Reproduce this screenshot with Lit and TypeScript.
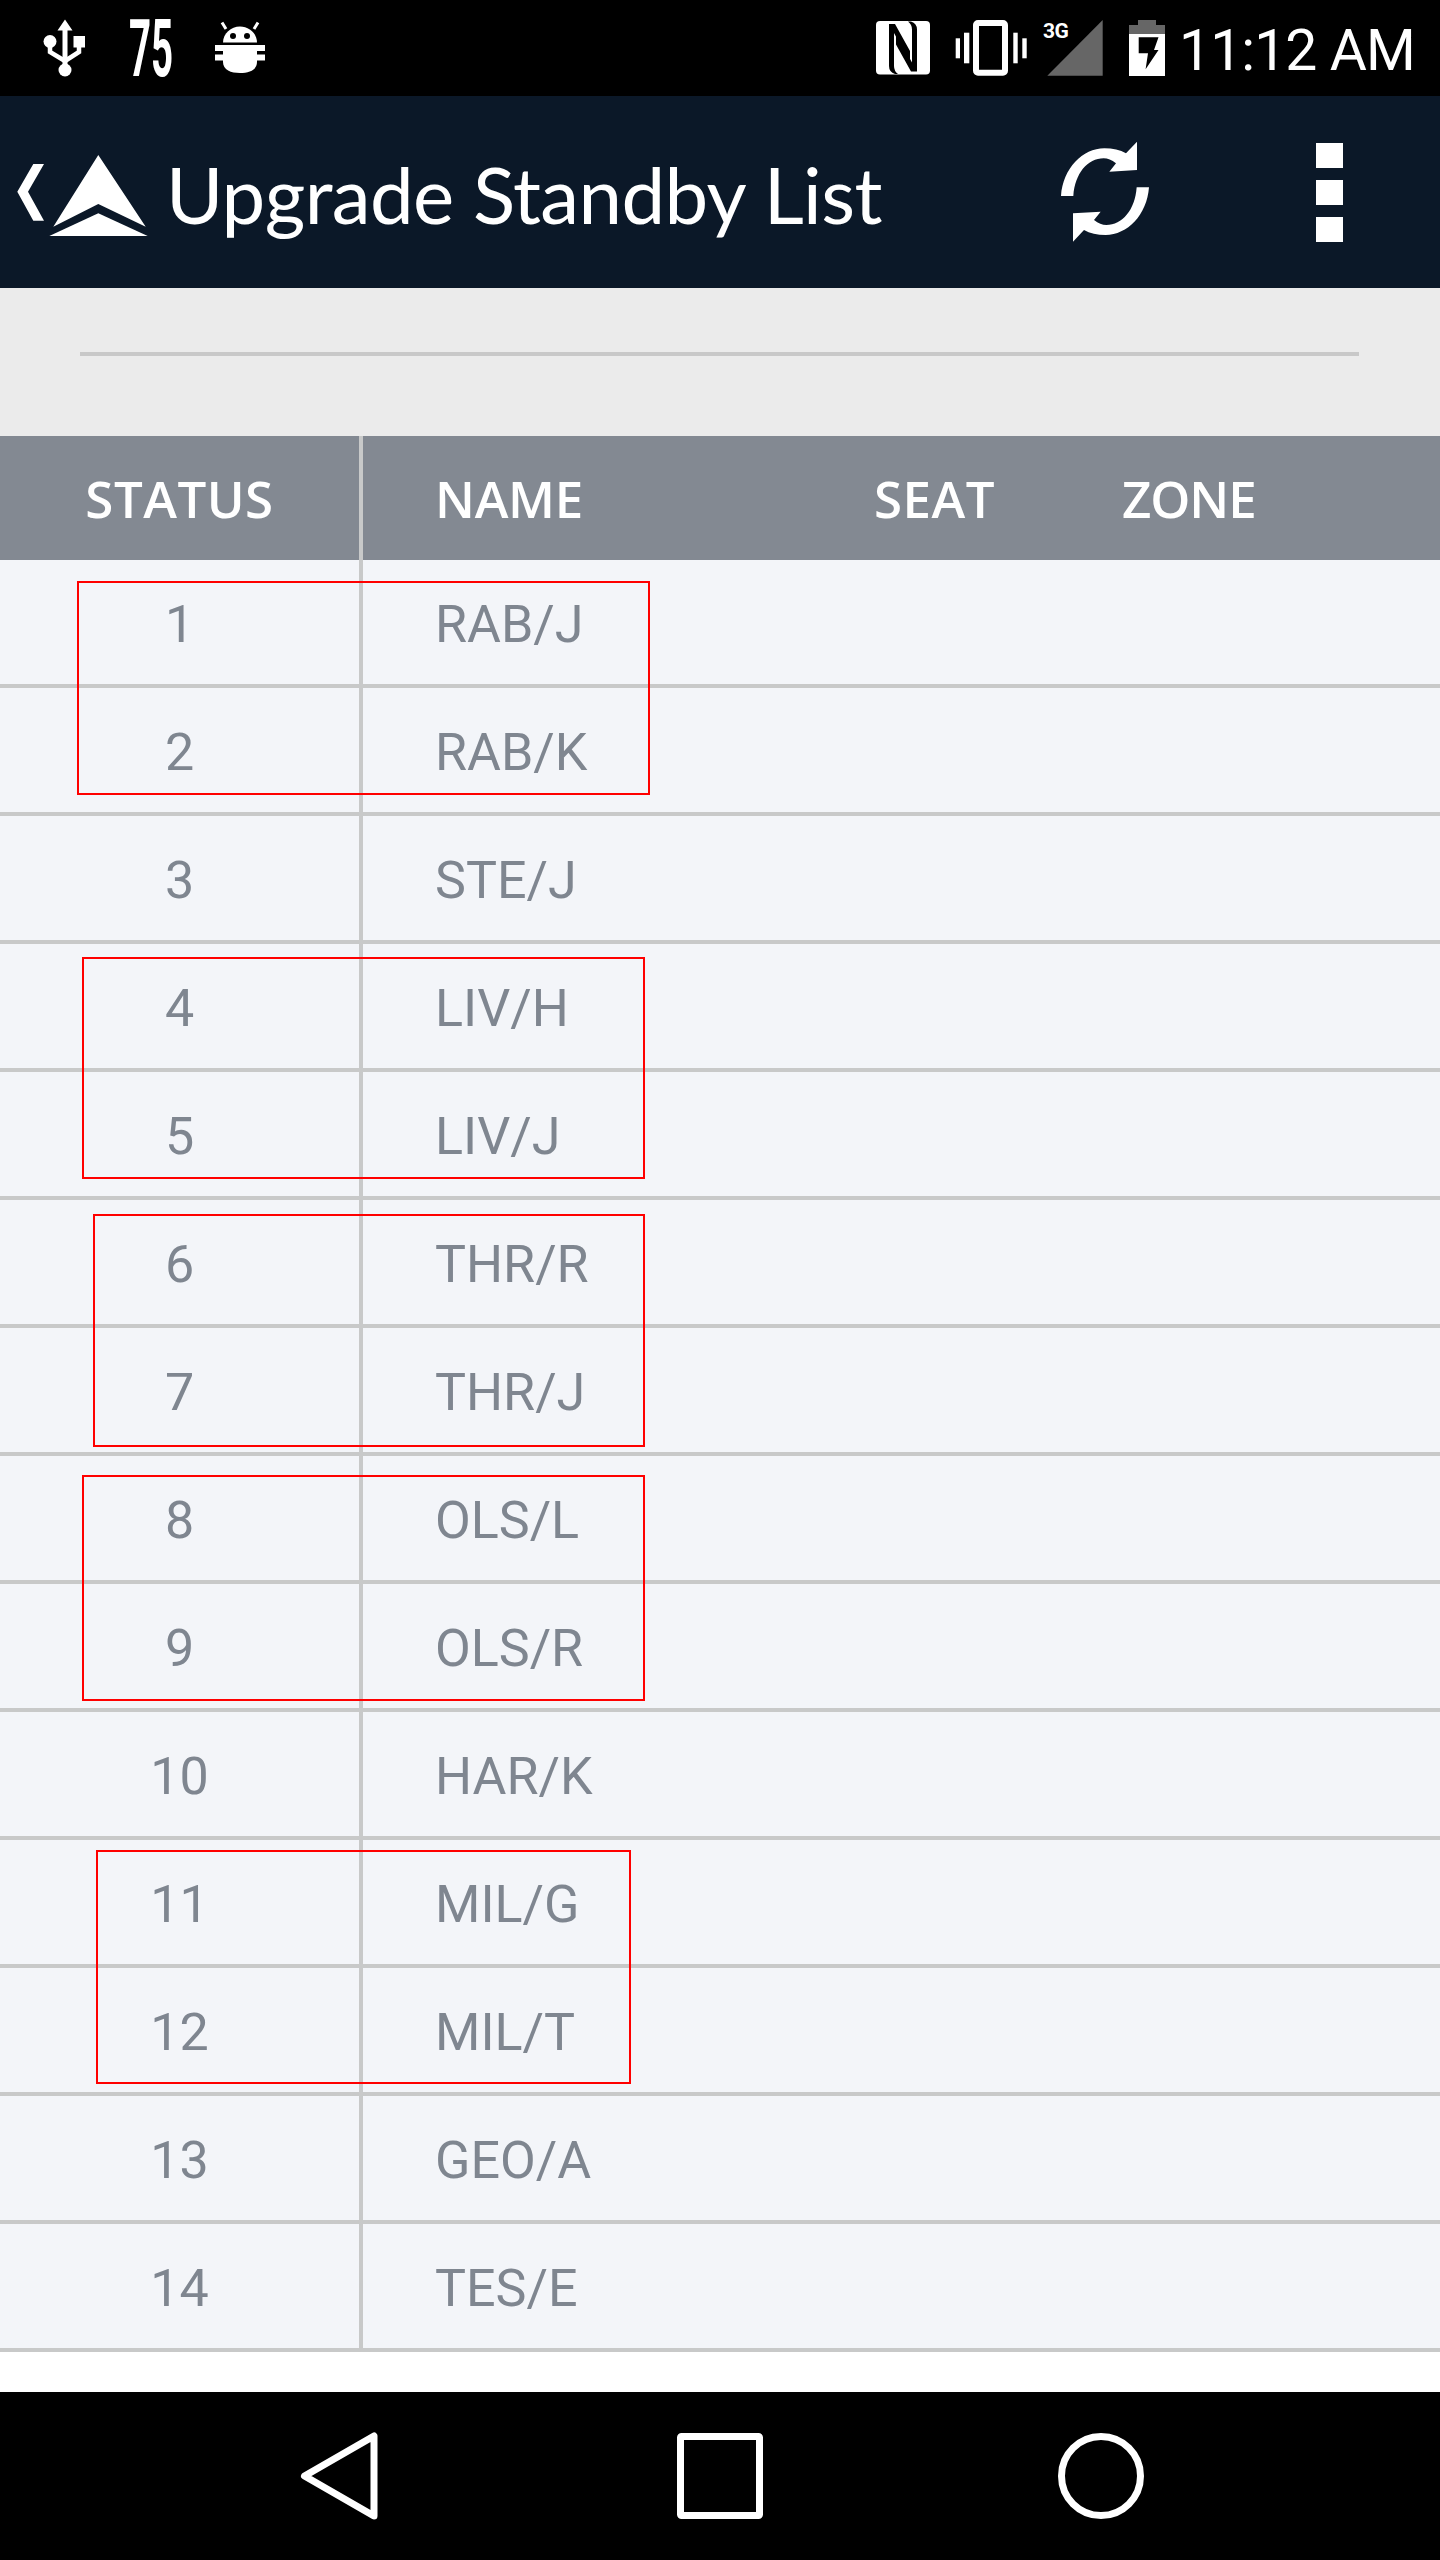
import { LitElement, css, html } from 'lit';
import { customElement } from 'lit/decorators.js';

const ROWS = [
    'RAB/J', 'RAB/K', 'STE/J', 'LIV/H', 'LIV/J', 'THR/R', 'THR/J',
    'OLS/L', 'OLS/R', 'HAR/K', 'MIL/G', 'MIL/T', 'GEO/A', 'TES/E',
];

// annotation boxes, relative to the top of the rows
const MARKS = [
    { left: 77, top: 21, width: 573, height: 214 },
    { left: 82, top: 397, width: 563, height: 222 },
    { left: 93, top: 654, width: 552, height: 233 },
    { left: 82, top: 915, width: 563, height: 226 },
    { left: 96, top: 1290, width: 535, height: 234 },
];

@customElement('app-root')
export class AppRoot extends LitElement {
    static styles = css`
        :host {
            display: flex;
            flex-direction: column;
            min-height: 2560px;
            background: #fff;
            font-family: Roboto, sans-serif;
        }

        svg {
            display: block;
            flex: none;
        }

        .status {
            display: flex;
            align-items: center;
            height: 96px;
            background: #000;
            color: #fff;
            padding-left: 40px;
        }

        .status .m-75 { margin-left: 35px; }
        .status .m-bug { margin-left: 38px; }
        .status .m-nfc { margin-left: auto; }
        .status .m-vib { margin-left: 22px; }
        .status .m-sig { margin-left: 12px; }
        .status .m-bat { margin-left: 23px; }

        .time {
            margin-left: 12px;
            margin-right: 28px;
            padding-top: 6px;
            width: 233px;
            font-size: 57px;
            line-height: 90px;
            font-weight: 400;
            letter-spacing: -.9px;
            white-space: nowrap;
        }

        .bar {
            display: flex;
            align-items: center;
            height: 192px;
            background: #0b1828;
        }

        .title {
            margin-left: 5px;
            padding-top: 3px;
            color: #fff;
            font-family: Lato, sans-serif;
            font-size: 78px;
            letter-spacing: -.6px;
            line-height: 186px;
            white-space: nowrap;
        }

        .refresh {
            margin-left: auto;
            margin-bottom: 4px;
        }

        .kebab {
            display: flex;
            flex-direction: column;
            gap: 12px;
            margin: 0 97px 0 145px;
        }

        .kebab span {
            display: block;
            width: 27px;
            height: 25px;
            background: #fff;
        }

        .search {
            height: 148px;
            padding: 64px 81px 0 80px;
            box-sizing: border-box;
            background: #ebebeb;
        }

        .search div {
            height: 4px;
            background: #c8c8c8;
        }

        .head {
            display: flex;
            height: 124px;
            background: #838992;
            color: #fff;
            font-family: 'Open Sans', sans-serif;
            font-weight: 600;
            font-size: 51px;
            letter-spacing: .5px;
            line-height: 124px;
        }

        .head .col-name {
            width: 511px;
            letter-spacing: -.3px;
        }

        .head .col-seat {
            width: 248px;
        }

        .head .col-zone {
            letter-spacing: -1.1px;
        }

        .col-status {
            width: 363px;
            box-sizing: border-box;
            border-right: 4px solid #c8c9c9;
            text-align: center;
        }

        .col-name {
            width: 512px;
            box-sizing: border-box;
            padding-left: 72px;
        }

        .rows {
            position: relative;
        }

        .row {
            display: flex;
            height: 128px;
            box-sizing: border-box;
            border-bottom: 4px solid #c8c9c9;
            background: #f3f5f9;
            color: #7f8690;
            font-size: 52px;
            line-height: 129px;
        }

        .mark {
            position: absolute;
            box-sizing: border-box;
            border: 2px solid #f00;
        }

        .spacer {
            flex: 1;
        }

        .nav {
            display: flex;
            align-items: center;
            height: 168px;
            background: #000;
            padding-left: 296px;
        }

        .nav .square { margin-left: 296px; }
        .nav .circle { margin-left: 295px; }
    `;

    render() {
        return html`
            <div class="status">
                <svg width="50" height="96" viewBox="40 0 50 96">
                    <g fill="#fff">
                        <path d="M65 19.5l7.5 11h-5v36h-5v-36h-5z" />
                        <circle cx="65" cy="70" r="6.5" />
                        <circle cx="50" cy="41.5" r="6.5" />
                        <rect x="73.5" y="36" width="11.5" height="11.5" />
                    </g>
                    <path d="M50 46v6l15 9 14-9v-6" fill="none" stroke="#fff" stroke-width="4.5" />
                </svg>
                <svg class="m-75" width="50" height="96" viewBox="125 0 50 96">
                    <text transform="translate(129 76) scale(.48 1)" fill="#fff" font-family="Roboto" font-weight="700" font-size="80">75</text>
                </svg>
                <svg class="m-bug" width="54" height="96" viewBox="213 0 54 96">
                    <g fill="#fff">
                        <path d="M223 42.5c0-9 8-16 17-16s17 7 17 16z" />
                        <rect x="215" y="45" width="50" height="6" />
                        <rect x="215" y="54.5" width="50" height="6" />
                        <rect x="223" y="50" width="34" height="6" />
                        <path d="M223 60h34v2c0 8-8 11-17 11s-17-3-17-11z" />
                    </g>
                    <path d="M226 29l-4-6.500M254 29l4-6.500" stroke="#fff" stroke-width="3" />
                    <circle cx="233" cy="36" r="3" fill="#000" />
                    <circle cx="247" cy="36" r="3" fill="#000" />
                </svg>
                <svg class="m-nfc" width="58" height="96" viewBox="874 0 58 96">
                    <rect x="876" y="21" width="54" height="53.500" rx="4" fill="#fff" />
                    <path d="M889 24h6l15 27v11L894 33v33q0 5 4 8h-3q-6-2-6-8z" fill="#000" />
                    <path d="M917 71.500h-6l-15-27v-11l16 29v-33q0-5-4-8h3q6 2 6 8z" fill="#000" />
                </svg>
                <svg class="m-vib" width="74" height="96" viewBox="954 0 74 96">
                    <rect x="976" y="23" width="29" height="49.700" rx="2" fill="none" stroke="#fff" stroke-width="6" />
                    <g fill="#fff">
                        <rect x="964" y="32.700" width="5.300" height="30.600" />
                        <rect x="955.700" y="38.300" width="4.300" height="20" />
                        <rect x="1013.300" y="32.700" width="4.400" height="30.600" />
                        <rect x="1022.300" y="38.300" width="4.400" height="20" />
                    </g>
                </svg>
                <svg class="m-sig" width="64" height="96" viewBox="1040 0 64 96">
                    <path d="M1047.300 75.700h55.400V20z" fill="#666" />
                    <text x="1043" y="38" fill="#fff" font-family="Roboto" font-weight="700" font-size="21" letter-spacing="-.5">3G</text>
                </svg>
                <svg class="m-bat" width="40" height="96" viewBox="1127 0 40 96">
                    <path d="M1138 20h18v5h9v9h-36v-9h9z" fill="#666" />
                    <path d="M1129 34h36v42h-36z" fill="#fff" />
                    <path d="M1138.700 37.300h19.800l-4.500 12.700h4.500l-12.900 19.300 2.400-16h-9.300z" fill="#000" />
                </svg>
                <div class="time">11:12 AM</div>
            </div>

            <div class="bar">
                <svg width="161" height="192" viewBox="0 96 161 192">
                    <path d="M44 164H33.300L17.300 191.700 33.300 220.700H44L28 191.700z" fill="#fff" />
                    <g fill="#fff" style="filter: blur(.7px)">
                        <path d="M98.300 155L145.700 226.700 98.300 204 53.300 226.700z" />
                        <path d="M98.300 213.300L147.700 236H49.300z" />
                    </g>
                </svg>
                <div class="title">Upgrade Standby List</div>
                <svg class="refresh" width="130" height="120" viewBox="0 0 390 360">
                    <g fill="#fff" style="filter: blur(.8px)">
                        <path d="M60 198C66 115 125 55 190 55 215 55 238 60 255 70L288 35V120L205 125 225 100C212 90 200 85 188 85 140 85 102 130 97 198z" />
                        <path d="M60 198C66 115 125 55 190 55 215 55 238 60 255 70L288 35V120L205 125 225 100C212 90 200 85 188 85 140 85 102 130 97 198z" transform="rotate(180 192 185)" />
                    </g>
                </svg>
                <div class="kebab"><span></span><span></span><span></span></div>
            </div>

            <div class="search"><div></div></div>

            <div class="head">
                <div class="col-status">STATUS</div>
                <div class="col-name">NAME</div>
                <div class="col-seat">SEAT</div>
                <div class="col-zone">ZONE</div>
            </div>

            <div class="rows">
                ${ROWS.map((name, i) => html`
                    <div class="row">
                        <div class="col-status">${i + 1}</div>
                        <div class="col-name">${name}</div>
                    </div>
                `)}
                ${MARKS.map((m) => html`
                    <div class="mark" style="left:${m.left}px;top:${m.top}px;width:${m.width}px;height:${m.height}px"></div>
                `)}
            </div>

            <div class="spacer"></div>

            <div class="nav">
                <svg width="85" height="94" viewBox="296 2429 85 94">
                    <path d="M374 2436V2516L304.500 2476z" fill="none" stroke="#fff" stroke-width="7" stroke-linejoin="round" />
                </svg>
                <svg class="square" width="86" height="86" viewBox="677 2433 86 86">
                    <rect x="680.500" y="2436.500" width="79" height="79" rx="1" fill="none" stroke="#fff" stroke-width="7" />
                </svg>
                <svg class="circle" width="86" height="86" viewBox="1058 2433 86 86">
                    <circle cx="1101" cy="2476" r="39.500" fill="none" stroke="#fff" stroke-width="7" />
                </svg>
            </div>
        `;
    }
}
